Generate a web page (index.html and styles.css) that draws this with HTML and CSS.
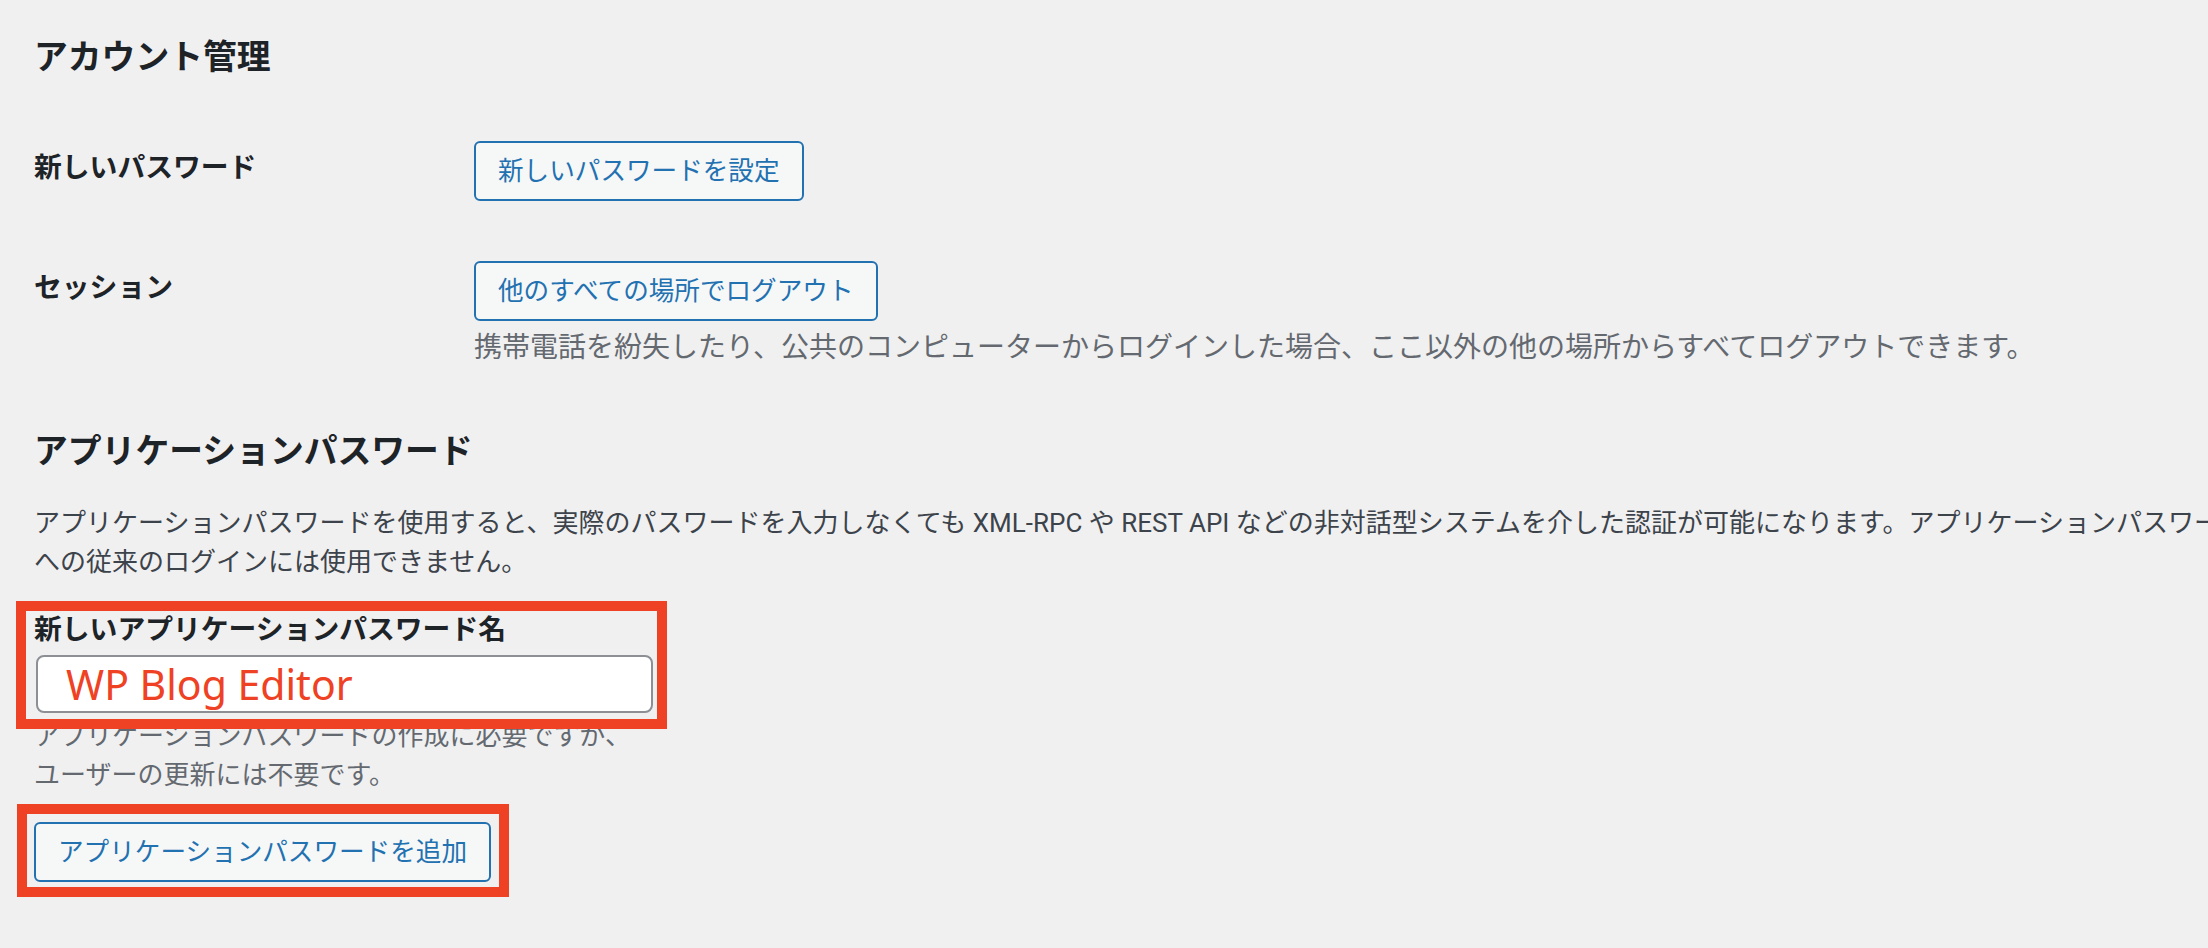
FILE: index.html
```html
<!DOCTYPE html>
<html lang="ja">
<head>
    <meta charset="UTF-8">
    <meta name="viewport" content="width=device-width, initial-scale=1.0">
    <title>アカウント管理</title>
    <link rel="stylesheet" href="styles.css">
</head>
<body>

    <div class="wrap">
        <h2 class="title">アカウント管理</h2>

        <div class="form-row">
            <div class="row-label">新しいパスワード</div>
            <div class="row-field">
                <button class="button" type="button">新しいパスワードを設定</button>
            </div>
        </div>

        <div class="form-row form-row-next">
            <div class="row-label">セッション</div>
            <div class="row-field">
                <button class="button" type="button">他のすべての場所でログアウト</button>
                <p class="description">携帯電話を紛失したり、公共のコンピューターからログインした場合、ここ以外の他の場所からすべてログアウトできます。</p>
            </div>
        </div>

        <h2 class="title title-app">アプリケーションパスワード</h2>
        <p class="intro">アプリケーションパスワードを使用すると、実際のパスワードを入力しなくても XML-RPC や REST API などの非対話型システムを介した認証が可能になります。アプリケーションパスワードは簡単に取り消すことができます。サイト<br>への従来のログインには使用できません。</p>

        <div class="app-form">
            <!-- 赤枠は注釈 -->
            <div class="field-box marked">
                <label class="field-label" for="app-name">新しいアプリケーションパスワード名</label>
                <input id="app-name" class="field-input" type="text" value="WP Blog Editor">
            </div>
            <p class="field-desc">アプリケーションパスワードの作成に必要ですが、<br>ユーザーの更新には不要です。</p>
            <div class="submit-box marked">
                <button class="button" type="button">アプリケーションパスワードを追加</button>
            </div>
        </div>
    </div>

</body>
</html>
```

FILE: styles.css
```css
body {
    margin: 0;
    background-color: #f0f0f1;
    color: #3c434a;
    font-family: Roboto, "Noto Sans CJK JP", sans-serif;
    font-size: 26px;
}
.wrap {
    padding: 0 0 60px 34px;
}
.title {
    margin: 36px 0 0;
    font-size: 33.8px;
    line-height: 43px;
    font-weight: 700;
    color: #1d2327;
}
.title-app {
    margin-top: 64px;
}
.form-row {
    display: grid;
    grid-template-columns: 440px auto;
    margin-top: 62px;
}
.form-row-next {
    margin-top: 60px;
}
.row-label {
    padding-top: 9px;
    font-size: 27.8px;
    line-height: 36px;
    font-weight: 700;
    color: #1d2327;
}
.button {
    display: inline-block;
    height: 60px;
    margin: 0;
    padding: 0 22px;
    border: 2px solid #2271b1;
    border-radius: 6px;
    background-color: #f6f7f7;
    color: #2271b1;
    font-family: Roboto, "Noto Sans CJK JP", sans-serif;
    font-size: 25.6px;
    line-height: 56px;
    white-space: nowrap;
    cursor: pointer;
}
.description {
    margin: 9px 0 0;
    font-size: 28px;
    line-height: 36px;
    color: #646970;
    white-space: nowrap;
}
.intro {
    margin: 31px 0 0;
    line-height: 39px;
    white-space: nowrap;
    overflow: hidden;
}
.app-form {
    margin-top: 31px;
}
.field-box {
    width: 619px;
}
.field-label {
    display: block;
    font-size: 27.8px;
    line-height: 34px;
    font-weight: 700;
    color: #1d2327;
}
.field-input {
    display: block;
    box-sizing: border-box;
    width: 617px;
    height: 58px;
    margin: 8px 0 0 2px;
    padding: 0 28px;
    border: 2px solid #8c8f94;
    border-radius: 8px;
    background-color: #fff;
    color: #ef4123;
    font-family: "Noto Sans", sans-serif;
    font-size: 41px;
}
.field-desc {
    margin: 4px 0 0;
    line-height: 39px;
    color: #646970;
    white-space: nowrap;
}
.submit-box {
    width: fit-content;
    margin-top: 27px;
}
.submit-box .button {
    display: block;
}

/* 注釈の赤枠 */
.marked {
    position: relative;
}
.marked::after {
    content: "";
    position: absolute;
    border: 10px solid #ef4123;
    pointer-events: none;
}
.field-box::after {
    top: -12px;
    bottom: -16px;
    left: -18px;
    right: -14px;
}
.submit-box::after {
    top: -18px;
    bottom: -15px;
    left: -17px;
    right: -18px;
}
```
